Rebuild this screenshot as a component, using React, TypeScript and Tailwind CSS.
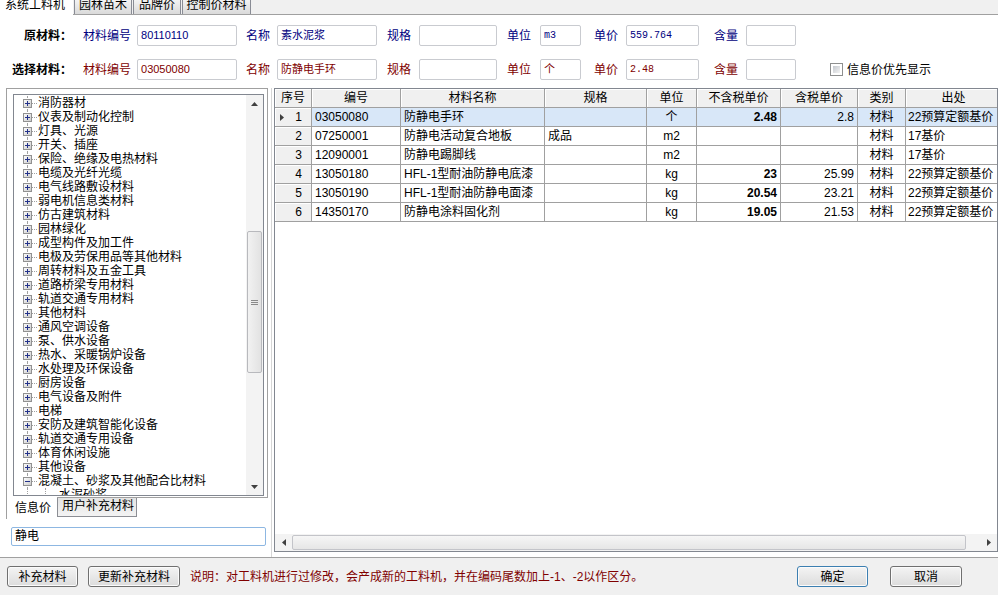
import React from 'react';

// 左侧分类树
const TREE = [
  '消防器材',
  '仪表及制动化控制',
  '灯具、光源',
  '开关、插座',
  '保险、绝缘及电热材料',
  '电缆及光纤光缆',
  '电气线路敷设材料',
  '弱电机信息类材料',
  '仿古建筑材料',
  '园林绿化',
  '成型构件及加工件',
  '电极及劳保用品等其他材料',
  '周转材料及五金工具',
  '道路桥梁专用材料',
  '轨道交通专用材料',
  '其他材料',
  '通风空调设备',
  '泵、供水设备',
  '热水、采暖锅炉设备',
  '水处理及环保设备',
  '厨房设备',
  '电气设备及附件',
  '电梯',
  '安防及建筑智能化设备',
  '轨道交通专用设备',
  '体育休闲设施',
  '其他设备',
];

type Row = {
  no: number;
  code: string;
  name: string;
  spec: string;
  unit: string;
  p1: string;
  p2: string;
  cat: string;
  src: string;
};

const ROWS: Row[] = [
  { no: 1, code: '03050080', name: '防静电手环', spec: '', unit: '个', p1: '2.48', p2: '2.8', cat: '材料', src: '22预算定额基价' },
  { no: 2, code: '07250001', name: '防静电活动复合地板', spec: '成品', unit: 'm2', p1: '', p2: '', cat: '材料', src: '17基价' },
  { no: 3, code: '12090001', name: '防静电踢脚线', spec: '', unit: 'm2', p1: '', p2: '', cat: '材料', src: '17基价' },
  { no: 4, code: '13050180', name: 'HFL-1型耐油防静电底漆', spec: '', unit: 'kg', p1: '23', p2: '25.99', cat: '材料', src: '22预算定额基价' },
  { no: 5, code: '13050190', name: 'HFL-1型耐油防静电面漆', spec: '', unit: 'kg', p1: '20.54', p2: '23.21', cat: '材料', src: '22预算定额基价' },
  { no: 6, code: '14350170', name: '防静电涂料固化剂', spec: '', unit: 'kg', p1: '19.05', p2: '21.53', cat: '材料', src: '22预算定额基价' },
];

const HEADERS = ['序号', '编号', '材料名称', '规格', '单位', '不含税单价', '含税单价', '类别', '出处'];

// 每列单元格的对齐方式
const CELL = [
  '',
  'pl-[3px]',
  'pl-[3px]',
  'pl-[3px]',
  'text-center',
  'text-right pr-[3px] font-bold',
  'text-right pr-[3px]',
  'text-center',
  'pl-[2px]',
];

type Field = { label: string; lm: string; im: string; w: string; v: string; mono?: boolean };

const ORIG: Field[] = [
  { label: '材料编号', lm: 'ml-[11px]', im: 'ml-[6px]', w: 'w-[100px]', v: '80110110' },
  { label: '名称', lm: 'ml-[9px]', im: 'ml-[7px]', w: 'w-[100px]', v: '素水泥浆' },
  { label: '规格', lm: 'ml-[10px]', im: 'ml-[8px]', w: 'w-[78px]', v: '' },
  { label: '单位', lm: 'ml-[10px]', im: 'ml-[9px]', w: 'w-[41px]', v: 'm3', mono: true },
  { label: '单价', lm: 'ml-[13px]', im: 'ml-[8px]', w: 'w-[73px]', v: '559.764', mono: true },
  { label: '含量', lm: 'ml-[15px]', im: 'ml-[8px]', w: 'w-[50px]', v: '' },
];

const PICK: Field[] = [
  { label: '材料编号', lm: 'ml-[11px]', im: 'ml-[6px]', w: 'w-[100px]', v: '03050080' },
  { label: '名称', lm: 'ml-[9px]', im: 'ml-[7px]', w: 'w-[100px]', v: '防静电手环' },
  { label: '规格', lm: 'ml-[10px]', im: 'ml-[8px]', w: 'w-[78px]', v: '' },
  { label: '单位', lm: 'ml-[10px]', im: 'ml-[9px]', w: 'w-[41px]', v: '个' },
  { label: '单价', lm: 'ml-[13px]', im: 'ml-[8px]', w: 'w-[73px]', v: '2.48', mono: true },
  { label: '含量', lm: 'ml-[15px]', im: 'ml-[8px]', w: 'w-[50px]', v: '' },
];

function ExpandBox({ open }: { open?: boolean }) {
  return (
    <svg width="9" height="9" viewBox="0 0 9 9" className="block" shapeRendering="crispEdges">
      <defs>
        <linearGradient id="ebg" x1="0" y1="0" x2="1" y2="1">
          <stop offset="0" stopColor="#ffffff" />
          <stop offset="1" stopColor="#c8c8c8" />
        </linearGradient>
      </defs>
      <rect x="0.5" y="0.5" width="8" height="8" fill="url(#ebg)" stroke="#919191" />
      <path d="M2 4.5H7" stroke="#23318a" />
      {!open && <path d="M4.5 2V7" stroke="#23318a" />}
    </svg>
  );
}

function Tri({ dir }: { dir: 'up' | 'down' | 'left' | 'right' }) {
  const d = {
    up: 'M0 4L3.5 0L7 4Z',
    down: 'M0 0L7 0L3.5 4Z',
    left: 'M4 0L4 7L0 3.5Z',
    right: 'M0 0L4 3.5L0 7Z',
  }[dir];
  const vertical = dir === 'up' || dir === 'down';
  return (
    <svg width={vertical ? 7 : 4} height={vertical ? 4 : 7} className="block">
      <path d={d} fill="#404040" />
    </svg>
  );
}

function FormRow({ title, color, fields, extra }: { title: string; color: string; fields: Field[]; extra?: React.ReactNode }) {
  return (
    <div className="flex h-[21px] items-center">
      <div className="w-[72px] text-right font-bold whitespace-nowrap">{title}</div>
      {fields.map((f) => (
        <React.Fragment key={f.label}>
          <span className={`${f.lm} ${color} whitespace-nowrap`}>{f.label}</span>
          <div
            className={`${f.im} ${f.w} h-[21px] rounded-[2px] border border-[#c9cbd0] bg-white pl-[3px] flex items-center overflow-hidden whitespace-nowrap ${color} ${
              f.mono ? "font-['Liberation_Mono',monospace] text-[10px]" : 'text-[11px]'
            }`}
          >
            {f.v}
          </div>
        </React.Fragment>
      ))}
      {extra}
    </div>
  );
}

function TreeRow({ text, open }: { text: string; open?: boolean }) {
  return (
    <div className="relative flex h-[14px] items-center">
      <span className="absolute left-[4px] top-0 bottom-0 border-l border-dotted border-[#a0a0a0]" />
      <span className="relative">
        <ExpandBox open={open} />
      </span>
      <span className="w-[5px] border-t border-dotted border-[#a0a0a0]" />
      <span className="ml-px leading-[14px] whitespace-nowrap">{text}</span>
    </div>
  );
}

function LeftPanel() {
  return (
    <div className="w-[272px] shrink-0 border-r border-[#d6d6d6] pl-[6px] flex flex-col">
      <div className="w-[262px] h-[410px] border border-[#a0a0a0] pt-[5px] pl-[6px] pr-[3px] pb-px">
        <div className="h-full border border-[#828790] flex bg-white">
          <div className="flex-1 overflow-hidden pl-[9px] pt-px">
            {TREE.map((t) => (
              <TreeRow key={t} text={t} />
            ))}
            <TreeRow text="混凝土、砂浆及其他配合比材料" open />
            <div className="relative flex h-[14px] items-center">
              <span className="absolute left-[4px] top-0 bottom-0 border-l border-dotted border-[#a0a0a0]" />
              <span className="absolute left-[22px] top-0 bottom-0 border-l border-dotted border-[#a0a0a0]" />
              <span className="ml-[23px] w-[12px] border-t border-dotted border-[#a0a0a0]" />
              <span className="ml-px leading-[14px] whitespace-nowrap">水泥砂浆</span>
            </div>
          </div>
          {/* 竖向滚动条 */}
          <div className="w-[17px] flex flex-col bg-[#f3f3f3]">
            <div className="h-[17px] flex items-center justify-center">
              <Tri dir="up" />
            </div>
            <div className="flex-1 px-px">
              <div className="mt-[119px] h-[142px] rounded-[2px] border border-[#b8b9bd] bg-linear-to-r from-[#f2f2f2] to-[#e2e2e2] flex items-center justify-center">
                <svg width="7" height="7" className="block" shapeRendering="crispEdges">
                  <path d="M0 1.5H7M0 3.5H7M0 5.5H7" stroke="#8a8a8a" />
                </svg>
              </div>
            </div>
            <div className="h-[17px] flex items-center justify-center">
              <Tri dir="down" />
            </div>
          </div>
        </div>
      </div>
      {/* 底部页签 */}
      <div className="flex h-[20px]">
        <div className="w-[51px] h-[22px] -mt-px bg-white border-l border-[#a0a0a0] pl-[8px] leading-[22px]">信息价</div>
        <div className="w-[80px] h-[19px] border border-t-0 border-[#8c8e94] bg-linear-to-b from-[#e4e4e4] to-[#f3f3f3] pl-[4px] leading-[17px] whitespace-nowrap">
          用户补充材料
        </div>
      </div>
      <div className="mt-[9px] ml-[5px] w-[255px] h-[19px] rounded-[2px] border border-[#8db7e2] bg-white pl-[3px] leading-[17px]">
        静电
      </div>
    </div>
  );
}

function Grid() {
  return (
    <div className="ml-[2px] flex-1 h-[464px] border border-[#828790] bg-white flex flex-col overflow-hidden">
      <div className="flex-1 overflow-hidden">
        <div className="grid w-[727px] grid-cols-[37px_89px_144px_102px_50px_84px_77px_48px_96px]">
          {HEADERS.map((h) => (
            <div
              key={h}
              className="h-[19px] border-r border-b border-[#a0a0a0] bg-[#f0f0f0] shadow-[inset_1px_1px_0_#ffffff] text-center leading-[18px] whitespace-nowrap"
            >
              {h}
            </div>
          ))}
          {ROWS.map((r) => {
            const vals = [r.code, r.name, r.spec, r.unit, r.p1, r.p2, r.cat, r.src];
            const sel = r.no === 1;
            return (
              <React.Fragment key={r.no}>
                <div className="h-[19px] border-r border-b border-[#a0a0a0] bg-[#f0f0f0] shadow-[inset_1px_1px_0_#ffffff] flex items-center pl-[5px] pr-[9px]">
                  {sel && <Tri dir="right" />}
                  <span className="ml-auto leading-[18px]">{r.no}</span>
                </div>
                {vals.map((v, i) => (
                  <div
                    key={i}
                    className={`h-[19px] border-r border-b border-[#a0a0a0] leading-[18px] whitespace-nowrap overflow-hidden ${CELL[i + 1]} ${
                      sel ? 'bg-[#d8e7f8]' : 'bg-white'
                    }`}
                  >
                    {v}
                  </div>
                ))}
              </React.Fragment>
            );
          })}
        </div>
      </div>
      {/* 横向滚动条 */}
      <div className="h-[17px] shrink-0 flex bg-[#f3f3f3]">
        <div className="w-[17px] flex items-center justify-center">
          <Tri dir="left" />
        </div>
        <div className="flex-1 py-px">
          <div className="w-[674px] h-full rounded-[2px] border border-[#c3c4c9] bg-linear-to-b from-[#f6f6f6] to-[#e6e6e6]" />
        </div>
        <div className="w-[17px] flex items-center justify-center">
          <Tri dir="right" />
        </div>
      </div>
    </div>
  );
}

function Btn({ className, children }: { className: string; children: React.ReactNode }) {
  return (
    <div
      className={`h-[21px] rounded-[3px] border bg-linear-to-b from-[#f4f4f4] to-[#dcdcdc] shadow-[inset_0_0_0_1px_#fbfbfb] flex items-center justify-center whitespace-nowrap ${className}`}
    >
      {children}
    </div>
  );
}

export default function App() {
  return (
    <div className="w-[998px] h-[595px] overflow-hidden bg-[#f0f0f0] flex flex-col font-['Liberation_Sans','Noto_Sans_CJK_SC',sans-serif] text-[12px] text-black">
      {/* 顶部页签 */}
      <div className="h-[15px] shrink-0 flex items-end border-b border-[#a0a0a0]">
        <div className="w-[73px] h-[15px] -mb-px bg-white pl-[5px] overflow-hidden">
          <span className="block leading-[12px] -mt-px">系统工料机</span>
        </div>
        {[
          { t: '园林苗木', w: 'w-[58px]' },
          { t: '品牌价', w: 'w-[48px]' },
          { t: '控制价材料', w: 'w-[69px]' },
        ].map((tab) => (
          <div
            key={tab.t}
            className={`${tab.w} ml-px h-[15px] overflow-hidden border border-b-0 border-[#898c95] bg-linear-to-b from-[#f3f3f3] to-[#dadada] text-center`}
          >
            <span className="block leading-[12px] -mt-px">{tab.t}</span>
          </div>
        ))}
      </div>

      <div className="flex-1 bg-white flex flex-col min-h-0">
        {/* 材料信息 */}
        <div className="h-[73px] shrink-0 pt-[10px] flex flex-col gap-[13px]">
          <FormRow title="原材料：" color="text-[#000080]" fields={ORIG} />
          <FormRow
            title="选择材料："
            color="text-[#800000]"
            fields={PICK}
            extra={
              <>
                <span className="ml-[34px] w-[13px] h-[13px] border border-[#8e8f8f] bg-white p-[2px]">
                  <span className="block w-full h-full bg-linear-to-br from-[#c4c8ce] to-[#f4f4f4]" />
                </span>
                <span className="ml-[4px] whitespace-nowrap">信息价优先显示</span>
              </>
            }
          />
        </div>
        <div className="flex h-[469px]">
          <LeftPanel />
          <Grid />
        </div>
      </div>

      {/* 底部按钮 */}
      <div className="h-[38px] shrink-0 border-t border-[#a0a0a0] flex items-center">
        <Btn className="ml-[7px] w-[71px] border-[#707070]">补充材料</Btn>
        <Btn className="ml-[10px] w-[92px] border-[#707070]">更新补充材料</Btn>
        <span className="ml-[10px] text-[#800000] whitespace-nowrap">
          说明：对工料机进行过修改，会产成新的工料机，并在编码尾数加上-1、-2以作区分。
        </span>
        <Btn className="ml-auto w-[71px] border-[#3c7fb1]">确定</Btn>
        <Btn className="ml-[22px] mr-[36px] w-[72px] border-[#707070]">取消</Btn>
      </div>
    </div>
  );
}
